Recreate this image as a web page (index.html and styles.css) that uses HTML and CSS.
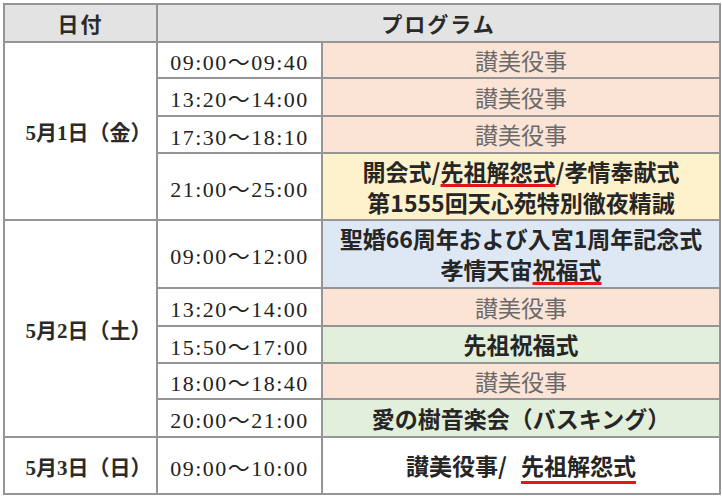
FILE: index.html
```html
<!DOCTYPE html>
<html lang="ja">
<head>
<meta charset="utf-8">
<link rel="stylesheet" href="styles.css">
</head>
<body>
<table class="sched">
  <colgroup><col class="c-date"><col class="c-time"><col class="c-prog"></colgroup>
  <thead>
    <tr class="h-head"><th>日付</th><th colspan="2">プログラム</th></tr>
  </thead>
  <tbody>
    <tr class="h36"><td class="date" rowspan="4">5月1日（金）</td><td class="time">09:00～09:40</td><td class="prog salmon light">讃美役事</td></tr>
    <tr class="h38"><td class="time">13:20～14:00</td><td class="prog salmon light">讃美役事</td></tr>
    <tr class="h37"><td class="time">17:30～18:10</td><td class="prog salmon light">讃美役事</td></tr>
    <tr class="h67"><td class="time">21:00～25:00</td><td class="prog yellow">開会式/<span class="mark">先祖解怨式</span>/孝情奉献式<br>第1555回天心苑特別徹夜精誠</td></tr>
    <tr class="h68"><td class="date" rowspan="5">5月2日（土）</td><td class="time">09:00～12:00</td><td class="prog blue">聖婚66周年および入宮1周年記念式<br>孝情天宙<span class="mark">祝福式</span></td></tr>
    <tr class="h38"><td class="time">13:20～14:00</td><td class="prog salmon light">讃美役事</td></tr>
    <tr class="h37"><td class="time">15:50～17:00</td><td class="prog green">先祖祝福式</td></tr>
    <tr class="h36"><td class="time">18:00～18:40</td><td class="prog salmon light">讃美役事</td></tr>
    <tr class="h38"><td class="time">20:00～21:00</td><td class="prog green">愛の樹音楽会（バスキング）</td></tr>
    <tr class="h57"><td class="date">5月3日（日）</td><td class="time">09:00～10:00</td><td class="prog">讃美役事/<span class="mark mark-low">先祖解怨式</span></td></tr>
  </tbody>
</table>
</body>
</html>
```
FILE: styles.css
```css
html, body {
  margin: 0;
  padding: 0;
  background: #ffffff;
}
body {
  padding: 3px 0 0 3px;
  font-family: "Liberation Serif", "Noto Sans CJK JP", serif;
  color: #222;
}
.sched {
  border-collapse: collapse;
  table-layout: fixed;
  width: 716px;
}
.c-date { width: 153px; }
.c-time { width: 165px; }
.c-prog { width: 398px; }
.sched th, .sched td {
  border: 2px solid #959595;
  padding: 0;
  text-align: center;
  vertical-align: middle;
}
.sched th {
  background: #e3e3e3;
  font-family: "Noto Sans CJK JP", sans-serif;
  font-weight: 700;
  font-size: 21px;
  letter-spacing: 2px;
  color: #2a2a2a;
  line-height: 1;
}
.h-head { height: 38px; }
.h36 { height: 36px; }
.h37 { height: 37px; }
.h38 { height: 38px; }
.h57 { height: 57px; }
.h67 { height: 67px; }
.h68 { height: 68px; }
.date {
  font-family: "Liberation Serif", "Noto Sans CJK JP", serif;
  font-weight: 700;
  font-size: 21px;
  color: #2a2a2a;
  padding-left: 16px !important;
}
.time {
  font-family: "Liberation Serif", "Noto Sans CJK JP", serif;
  font-size: 22px;
  letter-spacing: 1.5px;
  color: #222;
}
.prog {
  font-family: "Noto Sans CJK JP", sans-serif;
  font-weight: 700;
  font-size: 23px;
  line-height: 31px;
  color: #262626;
}
.prog.light {
  font-weight: 400;
  color: #6a6a6a;
}
.salmon { background: #fbe4d6; }
.yellow { background: #fef2cd; }
.blue { background: #dee7f4; }
.green { background: #e2efdb; }
.mark {
  text-decoration: underline;
  text-decoration-color: #e8141c;
  text-decoration-thickness: 3px;
  text-underline-offset: 3px;
  text-decoration-skip-ink: none;
}
.mark-low {
  margin-left: 14px;
  text-underline-offset: 6px;
}
```
